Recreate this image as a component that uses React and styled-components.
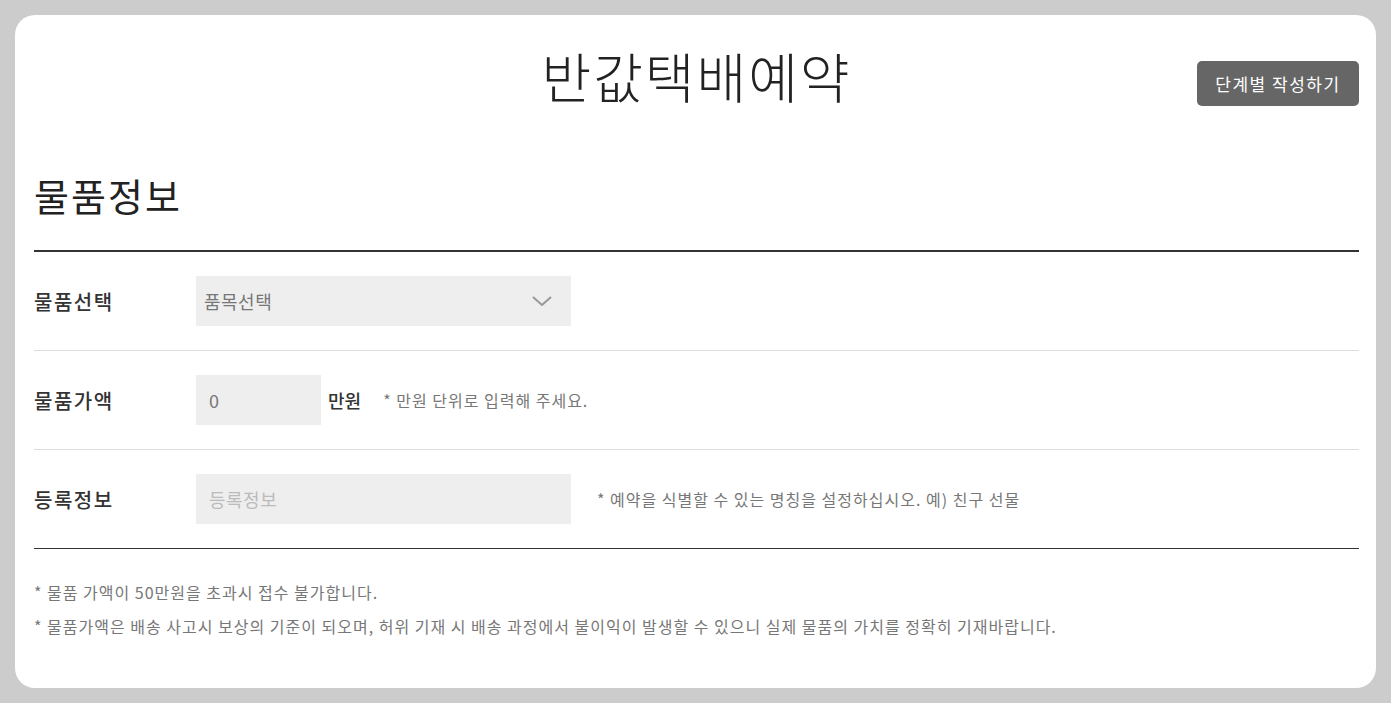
import React from 'react';
import styled, { createGlobalStyle } from 'styled-components';

const GlobalStyle = createGlobalStyle`
	* {
		box-sizing: border-box;
	}
	body {
		margin: 0;
		padding: 15px;
		background: #cccccc;
		font-family: 'Noto Sans CJK KR', 'Noto Sans', sans-serif;
		color: #333;
	}
`;

const Card = styled.div`
	background: #fff;
	border-radius: 20px;
	min-height: 673px;
	padding: 30px 17px 0 19px;
`;

const Header = styled.header`
	display: grid;
	grid-template-columns: 1fr auto 1fr;
	align-items: start;
`;

const Title = styled.h1`
	grid-column: 2;
	margin: 0;
	font-size: 54px;
	line-height: 62px;
	font-weight: 300;
	color: #222;
	letter-spacing: 2px;
`;

const StepButton = styled.button`
	grid-column: 3;
	justify-self: end;
	margin-top: 16px;
	height: 45px;
	width: 162px;
	border: none;
	border-radius: 5px;
	background: #666;
	color: #fff;
	font-family: inherit;
	font-size: 17px;
	letter-spacing: 1.5px;
	cursor: pointer;
`;

const SectionTitle = styled.h2`
	margin: 66px 0 0;
	padding-bottom: 33px;
	font-size: 38px;
	line-height: 44px;
	font-weight: 400;
	color: #222;
	letter-spacing: 2px;
	border-bottom: 2px solid #333;
`;

const Row = styled.div`
	display: flex;
	align-items: center;
	padding: 24px 0;
	border-bottom: 1px solid ${(p) => (p.$last ? '#333' : '#dddddd')};
`;

const Label = styled.div`
	width: 162px;
	flex-shrink: 0;
	font-size: 20px;
	font-weight: 500;
	color: #333;
	letter-spacing: 1.5px;
`;

const Field = styled.div`
	position: relative;
	width: ${(p) => p.$width}px;
	height: 50px;
	flex-shrink: 0;
`;

const Select = styled.select`
	appearance: none;
	width: 100%;
	height: 100%;
	border: none;
	outline: none;
	background: #eee;
	padding: 0 8px;
	font-family: inherit;
	font-size: 18px;
	color: #777;
	letter-spacing: 0.5px;
`;

const Chevron = styled.svg`
	position: absolute;
	right: 19px;
	top: 20px;
	pointer-events: none;
`;

const Input = styled.input`
	width: 100%;
	height: 100%;
	border: none;
	outline: none;
	background: #eee;
	padding: 0 13px;
	font-family: inherit;
	font-size: 18px;
	color: #777;
	letter-spacing: 0.5px;
	&::placeholder {
		color: #bbb;
	}
`;

const Unit = styled.span`
	margin-left: 7px;
	font-size: 18px;
	font-weight: 500;
	color: #333;
`;

const Hint = styled.span`
	margin-left: ${(p) => p.$gap}px;
	font-size: 16px;
	color: #777;
	letter-spacing: 1px;
`;

const Notes = styled.div`
	padding-top: 26px;
`;

const Note = styled.p`
	margin: 0;
	font-size: 16px;
	line-height: 34px;
	color: #777;
	letter-spacing: 1px;
`;

const App = () => {
	return (
		<>
			<GlobalStyle />
			<Card>
				<Header>
					<Title>반값택배예약</Title>
					<StepButton>단계별 작성하기</StepButton>
				</Header>
				<SectionTitle>물품정보</SectionTitle>
				<Row>
					<Label>물품선택</Label>
					<Field $width={375}>
						<Select defaultValue="">
							<option value="">품목선택</option>
						</Select>
						<Chevron width="20" height="10" viewBox="0 0 20 10">
							<path d="M1 1 L10 9 L19 1" fill="none" stroke="#999" strokeWidth="2" />
						</Chevron>
					</Field>
				</Row>
				<Row>
					<Label>물품가액</Label>
					<Field $width={125}>
						<Input defaultValue="0" />
					</Field>
					<Unit>만원</Unit>
					<Hint $gap={22}>* 만원 단위로 입력해 주세요.</Hint>
				</Row>
				<Row $last>
					<Label>등록정보</Label>
					<Field $width={375}>
						<Input placeholder="등록정보" />
					</Field>
					<Hint $gap={26}>* 예약을 식별할 수 있는 명칭을 설정하십시오. 예) 친구 선물</Hint>
				</Row>
				<Notes>
					<Note>* 물품 가액이 50만원을 초과시 접수 불가합니다.</Note>
					<Note>
						* 물품가액은 배송 사고시 보상의 기준이 되오며, 허위 기재 시 배송 과정에서 불이익이 발생할 수 있으니 실제 물품의
						가치를 정확히 기재바랍니다.
					</Note>
				</Notes>
			</Card>
		</>
	);
};

export default App;
